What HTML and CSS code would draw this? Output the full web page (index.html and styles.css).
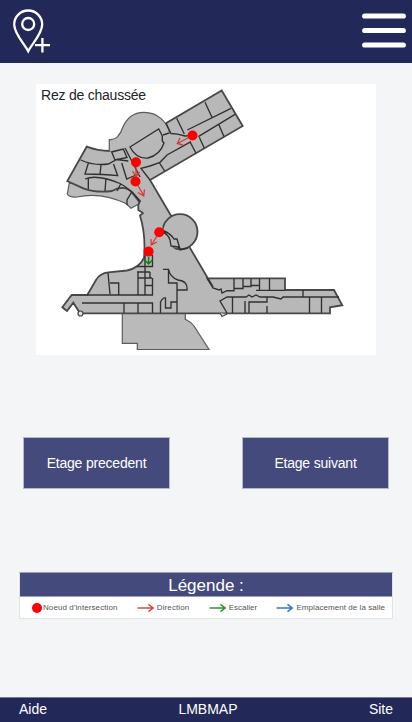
FILE: index.html
```html
<!DOCTYPE html>
<html lang="fr">
<head>
<meta charset="utf-8">
<meta name="viewport" content="width=device-width, initial-scale=1">
<title>LMBMAP</title>
<link rel="stylesheet" href="styles.css">
</head>
<body>
<header class="topbar">
  <svg class="pin" viewBox="0 0 46 46" aria-hidden="true">
    <path d="M21.200 43.200C18 36.500 7.200 26 7.200 16.500a14 14 0 0 1 28 0C35.200 26 24.400 36.500 21.200 43.200Z"/>
    <circle cx="21.200" cy="16" r="6"/>
    <path d="M28 37.200H43M35.400 30V44.500"/>
  </svg>
  <svg class="menu" viewBox="0 0 44 36" aria-hidden="true">
    <path d="M2.700 3H41.300M2.700 17.500H41.300M2.700 32H41.300"/>
  </svg>
</header>
<main>
  <section class="plan">
    <h1 class="floor">Rez de chaussée</h1>
    <svg class="map" viewBox="36 84 340 271" aria-hidden="true">
      <g class="thin">
        <path d="M69.300 183L67.300 194Q69 197.500 77 197C94 193 112 197 126 203.500L131 208.300L140 203.300L128 188L105 188Z"/>
        <path d="M122.300 313V343.300H137.300V349.500H209L194 326Q191 322 185.300 319.300V313Z"/>
      </g>
      <g class="body">
        <path d="M221.700 90.500L242.700 126L150 180L213 287L207.300 278.300H285V290H334L342.300 305.200L330 307.300V313.300H80L73.300 302.700L67 311L62.300 307.300L71.700 295H87.300L96 280Q100 273 108.300 272.300L127 270.500Q139 268 144 258Q146 235 140 215.500L143 213L138.300 210V205L140 201L133 193Q124 184 112 191Q96 193 83.300 188.300L67.300 181L86.700 146.700Q98 151 110 151L150 137L168 131L166 123.300Z"/>
        <circle cx="180" cy="231.700" r="17.500"/>
      </g>
      <path class="fill" d="M132 172L141 169L148 179L166 211L162 224L163 233L170 238L171 246L176 250L186 251L180 262L147 256L146 223L141 200Z"/>
      <path class="thin" d="M109.300 152V139.500Q115 140 118 136Q121 133 122 129C127 116 136 112.300 144 112.300C158 112.300 167 122 170 133.500"/>
      <g class="walls">
        <path d="M205 102.300L212.300 118M176.700 118.300L184.300 134M187.300 130L231 108.300M235 114.300L198.300 136.700M191 141.700L167 155L160 162.300L150 166L141 168.300L150 180M190 141.700L196 153.300M199.300 137.300L204.300 148.300M219 125L224 136.700M159.300 162.700L164.700 171M166 123.300L171 133.500Q177 133.500 185 136L192 135.700M163 135L169 133"/>
        <path d="M130 147L158.700 129L162.300 136V141L164 143Q160 155 148 158Q136 159 130 147Z"/>
        <path d="M80.700 160Q94 166 108.300 164L116.700 159.500L128.300 161M88.300 163.300L85 174Q104 174 117.700 175.700L113.500 164M101 165L100 174.300M111.700 152L123.300 149L127 157.500L115 160ZM125 148L140 177M121.700 163L126.700 179L136 175"/>
        <path d="M85 179Q97 174 120 183.500Q131 189 140 202M88.300 178V189M106 178L105 191M120.700 184L117 191M131.700 192L127 200V205"/>
        <path d="M82 303H152.500V313M124 303V313M138 303V313M87.300 295H152.500V278M108 273L110 294M110 283H118.700V294.500M138 272V294.500M145 256V295M138 278H152M150 272V278M137 272H150M145 285.500H152.500M137 266.500H152.500V255"/>
        <path d="M163 269.300H168.500V283H177V313M168.500 269.300Q170 277 178 280Q188 281 187 290H177M160.500 313V302Q163 297 165.500 298V308H171V302H177M162.500 232Q168 234 170 240L171 246L178 247L180 250L188 248M163 230.500Q170 233 174 239L177 239L180 249"/>
        <path d="M207.300 278.300L213 288L219 290L221 289L222 293L227 290.700H234V278.500M234 288.500H243V278.500M243 286.500H251V278.500M251 285.500H259.500M259.500 278.500V290.300H285M269.500 278.500V290M256 290.300H285M303 290V297M339 297H283L281 299L273 297H260L256 295L252 297L249 295L246 297H227L220 301L227 313M232.500 297V313M245 301V313M249 313V302H267V297M267 306V313M309.500 297V313M321.500 297V313"/>
      </g>
      <path class="mark" d="M220 313.300L222 316.500L227 314"/>
      <circle class="mark" cx="80.500" cy="313.500" r="2.500"/>
      <g class="route">
        <path d="M192.500 135.500L177.500 143.500M180 138L177.300 143.500L183 145M136 162V176M132.500 171L136 176.500L139.500 172M135.500 181.500L144 196M137.800 192.500L143.700 196L144.500 189.500M159 232.500L151.500 245M151 239L151.300 245L157 242"/>
      </g>
      <path class="stair" d="M148.600 257V263.500M144.700 260L148.600 264L152.500 260"/>
      <g class="nodes">
        <circle cx="192.500" cy="135.500" r="5"/><circle cx="136" cy="162.200" r="5"/><circle cx="135.500" cy="181.500" r="5"/><circle cx="159.200" cy="232.300" r="5"/><circle cx="148.600" cy="251.600" r="5"/>
      </g>
    </svg>
  </section>
  <nav class="floors">
    <button class="step">Etage precedent</button>
    <button class="step">Etage suivant</button>
  </nav>
  <section class="legend">
    <h2 class="legend-title">Légende :</h2>
    <ul class="keys">
      <li class="key node"><span class="dot"></span>Noeud d'intersection</li>
      <li class="key direction"><svg class="arrow" viewBox="0 0 18 10"><path d="M0.500 5H16M11.500 1.300L16.200 5L11.500 8.700"/></svg>Direction</li>
      <li class="key stairs"><svg class="arrow" viewBox="0 0 18 10"><path d="M0.500 5H16M11.500 1.300L16.200 5L11.500 8.700"/></svg>Escalier</li>
      <li class="key room"><svg class="arrow" viewBox="0 0 18 10"><path d="M0.500 5H16M11.500 1.300L16.200 5L11.500 8.700"/></svg>Emplacement de la salle</li>
    </ul>
  </section>
</main>
<footer class="bottombar">
  <span>Aide</span><span>LMBMAP</span><span>Site</span>
</footer>
</body>
</html>
```
FILE: styles.css
```css
* { box-sizing: border-box; }
body {
  margin: 0;
  height: 722px;
  display: flex;
  flex-direction: column;
  background: #f3f5f7;
  color: #212529;
  font: 14px/20px "Liberation Sans", Arial, sans-serif;
}
.topbar {
  height: 63px;
  flex: none;
  display: flex;
  justify-content: space-between;
  padding: 8px 6px 0 7px;
  background: #222858;
}
.pin { width: 46px; height: 46px; fill: none; stroke: #fff; stroke-width: 2.3; }
.menu { width: 44px; height: 36px; margin-top: 5px; stroke: #fff; stroke-width: 5.200; stroke-linecap: round; }
main { flex: 1; display: flex; flex-direction: column; }
.plan { width: 340px; height: 271px; margin: 21px 0 0 36px; background: #fff; display: grid; }
.floor { grid-area: 1 / 1; margin: 1px 0 0 5px; font-size: 14px; font-weight: 400; line-height: 20px; letter-spacing: -0.22px; z-index: 1; justify-self: start; align-self: start; }
.map { grid-area: 1 / 1; width: 340px; height: 271px; }
.thin { fill: #bababa; stroke: #5c5c5c; stroke-width: 1.200; }
.body { fill: #b8b8b8; stroke: #484848; stroke-width: 1.800; }
.fill { fill: #b8b8b8; }
.walls { fill: none; stroke: #303030; stroke-width: 1.350; }
.mark { fill: #ddd; stroke: #444; stroke-width: 1.200; }
.route { fill: none; stroke: #d63b3b; stroke-width: 1.300; }
.stair { fill: none; stroke: #078514; stroke-width: 1.500; }
.nodes { fill: #f00; }
.floors { display: flex; justify-content: space-between; margin: 82px 23px 0; }
.step {
  width: 147px;
  height: 52px;
  padding: 0;
  border: 1px solid #b4b9cb;
  background: #444a7c;
  color: #fff;
  font: inherit;
  letter-spacing: -0.2px;
}
.legend { width: 374px; height: 47px; margin: 83px 0 0 19px; border: 1px solid #dfe3e6; border-top-color: #9a9fbb; background: #fff; }
.legend-title { height: 24px; margin: 0; border-bottom: 1px solid #9a9fbb; background: #444a7c; color: #fff; text-align: center; font-size: 17px; font-weight: 400; line-height: 25px; }
.keys { margin: 0; padding: 0 7px 0 12px; height: 21px; display: flex; align-items: center; justify-content: space-between; list-style: none; color: #555; font-size: 8px; line-height: 12px; }
.key { display: flex; align-items: center; white-space: nowrap; }
.node { letter-spacing: 0.09px; }
.direction { letter-spacing: 0.1px; }
.room { letter-spacing: 0.06px; }
.dot { width: 10px; height: 10px; margin-right: 1px; border-radius: 50%; background: #f00; }
.arrow { width: 18px; height: 10px; margin-right: 2px; fill: none; stroke: currentColor; stroke-width: 1.500; }
.direction .arrow { color: #d34b4b; }
.stairs .arrow { color: #2a962b; }
.room .arrow { color: #2d7cc4; }
.bottombar { height: 25px; flex: none; padding: 1px 19px 0; display: flex; justify-content: space-between; border-top: 1px solid #777b99; background: #222858; color: #fff; }
```
